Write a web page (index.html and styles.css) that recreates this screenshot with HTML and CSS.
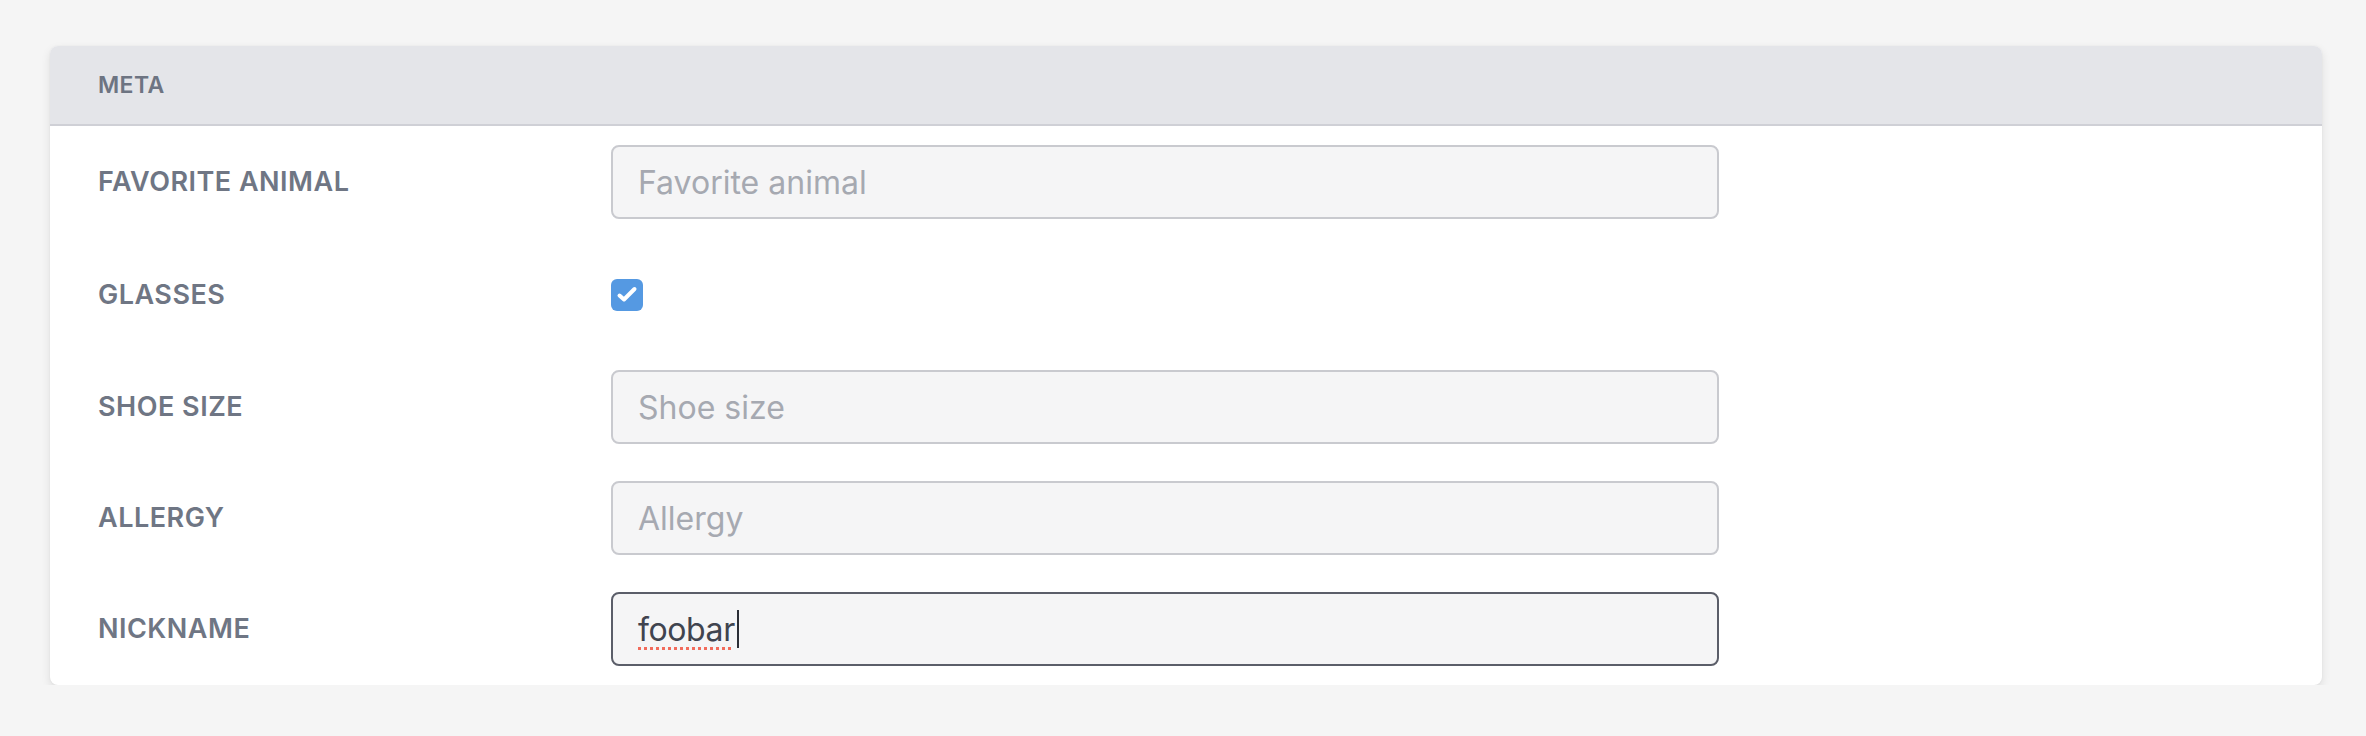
FILE: index.html
```html
<!DOCTYPE html>
<html lang="en">
<head>
<meta charset="utf-8">
<title>Meta</title>
<link rel="stylesheet" href="styles.css">
</head>
<body>
  <section class="card">
    <header class="card-header">META</header>
    <div class="card-body">
      <div class="field-label">FAVORITE ANIMAL</div>
      <div class="field"><div class="input placeholder">Favorite animal</div></div>

      <div class="field-label">GLASSES</div>
      <div class="field field-check">
        <span class="checkbox">
          <svg viewBox="0 0 32 32" width="32" height="32"><path d="M8.5 16.5 L13 20.5 L23.5 10" fill="none" stroke="#fff" stroke-width="4" stroke-linecap="round" stroke-linejoin="round"/></svg>
        </span>
      </div>

      <div class="field-label">SHOE SIZE</div>
      <div class="field"><div class="input placeholder">Shoe size</div></div>

      <div class="field-label">ALLERGY</div>
      <div class="field"><div class="input placeholder">Allergy</div></div>

      <div class="field-label">NICKNAME</div>
      <div class="field"><div class="input focused"><span class="typed">foobar</span><span class="caret"></span></div></div>
    </div>
  </section>
</body>
</html>
```
FILE: styles.css
```css
html, body {
  margin: 0;
  padding: 0;
}
body {
  background: #f5f5f5;
  padding: 46px 44px 0 50px;
  font-family: Inter, "Noto Sans", "Liberation Sans", sans-serif;
}
.card {
  background: #ffffff;
  border-radius: 8px;
  overflow: hidden;
  box-shadow: 0 4px 10px rgba(0, 0, 0, 0.10), 0 0 2px rgba(0, 0, 0, 0.05);
}
.card-header {
  height: 78px;
  background: #e4e5e9;
  border-bottom: 2px solid #cfd0d6;
  padding: 0 48px;
  display: flex;
  align-items: center;
  font-size: 23px;
  font-weight: 600;
  letter-spacing: 0.4px;
  color: #6d7482;
}
.card-body {
  display: grid;
  grid-template-columns: 513px 1108px;
  row-gap: 37px;
  align-items: center;
  padding: 19px 48px 19px 48px;
}
.field-label {
  font-size: 27px;
  font-weight: 600;
  letter-spacing: 0.5px;
  color: #6f7684;
  line-height: 32px;
}
.field {
  display: flex;
  align-items: center;
}
.field-check {
  height: 77px;
}
.input {
  box-sizing: border-box;
  width: 1108px;
  height: 74px;
  border: 2px solid #c9cacf;
  border-radius: 8px;
  background: #f5f5f6;
  padding: 0 25px;
  display: flex;
  align-items: center;
  font-size: 32px;
  color: #a6a9b1;
}
.input.focused {
  border-color: #5b5e69;
  color: #40444f;
}
.typed {
  letter-spacing: -0.4px;
  text-decoration: underline dotted #f26b5b;
  text-decoration-thickness: 3px;
  text-underline-offset: 6px;
}
.caret {
  display: inline-block;
  width: 2px;
  height: 38px;
  background: #2b2e36;
  margin-left: 2px;
}
.checkbox {
  width: 32px;
  height: 32px;
  border-radius: 6px;
  background: #5599e2;
  display: flex;
  align-items: center;
  justify-content: center;
}
.checkbox svg {
  display: block;
}
```
